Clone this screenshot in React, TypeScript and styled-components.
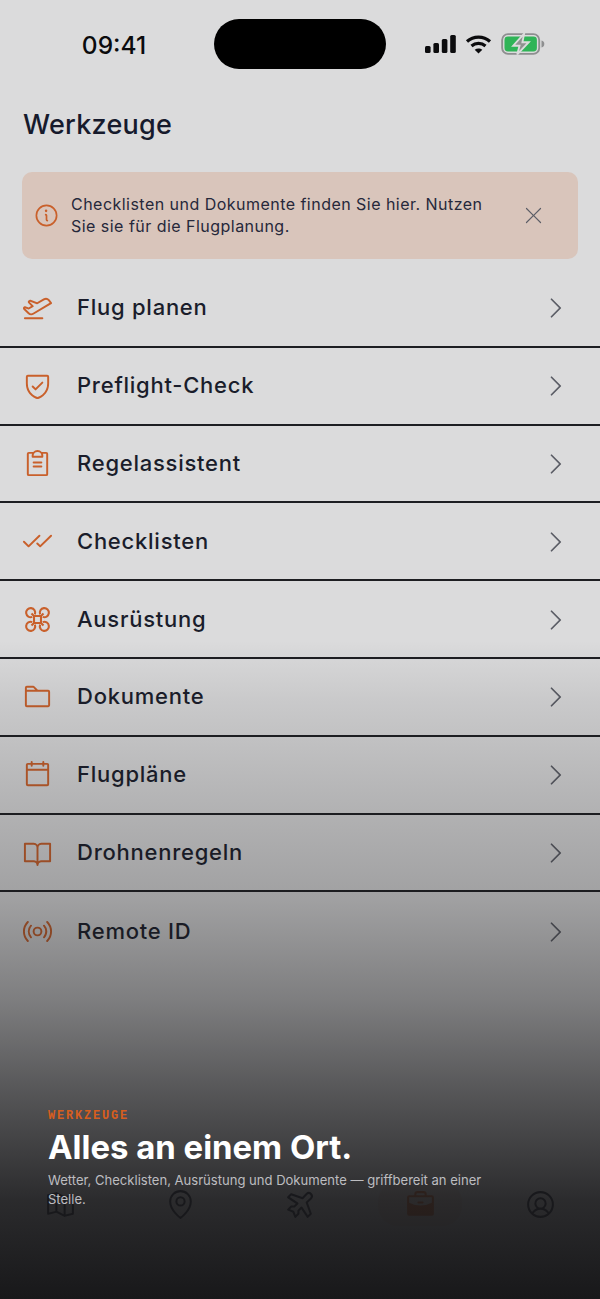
import React from 'react'
import styled, { createGlobalStyle } from 'styled-components'
import {
    PiAirplaneTakeoff,
    PiShieldCheck,
    PiClipboardText,
    PiChecks,
    PiFolder,
    PiCalendarBlank,
    PiBookOpen,
    PiBroadcast,
    PiCaretRight,
    PiXLight,
    PiInfo,
    PiMapTrifold,
    PiMapPin,
    PiAirplaneTilt,
    PiBriefcaseFill,
    PiUserCircle,
} from 'react-icons/pi'

const GlobalStyle = createGlobalStyle`
    html, body {
        margin: 0;
        padding: 0;
        background: #dbdbdc;
    }
    * {
        box-sizing: border-box;
    }
`

const Screen = styled.div`
    position: relative;
    width: 600px;
    height: 1299px;
    overflow: hidden;
    background: #dbdbdc;
    color: #161a2c;
    font-family: Inter, "Liberation Sans", sans-serif;
`

const StatusBar = styled.div`
    display: grid;
    grid-template-columns: 214px 172px 1fr;
    align-items: center;
    height: 50px;
    margin-top: 19px;
`

const Time = styled.div`
    justify-self: center;
    padding: 2px 0 0 14px;
    font-size: 24.5px;
    font-weight: 550;
    color: #0b0b0d;
`

const Island = styled.div`
    height: 50px;
    border-radius: 25px;
    background: #000;
`

const StatusIcons = styled.div`
    display: flex;
    align-items: center;
    gap: 9px;
    height: 100%;
    padding-left: 39px;
`

const Title = styled.h1`
    margin: 39px 0 0 23px;
    font-size: 27px;
    line-height: 34px;
    font-weight: 500;
    letter-spacing: 0.25px;
`

const Banner = styled.div`
    display: flex;
    align-items: center;
    height: 87px;
    margin: 30px 22px 0;
    padding: 0 32px 0 11px;
    border-radius: 10px;
    background: #d9c5bb;
`

const BannerIcon = styled.span`
    display: flex;
    font-size: 27px;
    color: #c9602b;
`

const BannerText = styled.p`
    flex: 1;
    margin: 0 28px 2px 11px;
    font-size: 16px;
    line-height: 22px;
    letter-spacing: 0.47px;
    color: #26283a;
`

const CloseIcon = styled.span`
    display: flex;
    font-size: 25px;
    color: #5b5d66;
`

const List = styled.div`
    margin-top: 11px;
`

const Row = styled.div`
    display: flex;
    align-items: center;
    height: 77.8px;
    padding: 0 31px 0 21px;
    border-bottom: 2px solid #1d1e22;

    &:last-child {
        border-bottom: none;
    }
`

const RowIcon = styled.span`
    display: flex;
    justify-content: center;
    width: 32px;
    font-size: 31px;
    color: #c9602b;
`

const RowLabel = styled.span`
    flex: 1;
    margin: 0 0 1px 24px;
    font-size: 22px;
    font-weight: 450;
    letter-spacing: 0.75px;
    color: #1a1d2b;
`

const Chevron = styled.span`
    display: flex;
    padding-top: 1px;
    font-size: 28px;
    color: #5b5d66;
`

const TabBar = styled.div`
    position: absolute;
    left: 0;
    right: 0;
    top: 1174px;
    display: grid;
    grid-template-columns: repeat(5, 120px);
    height: 60px;
`

const Tab = styled.div`
    display: flex;
    align-items: center;
    justify-content: center;
    font-size: 33px;
    color: #1a1d2b;
`

const ActiveTab = styled(Tab)`
    justify-self: center;
    align-self: center;
    width: 84px;
    height: 44px;
    border-radius: 20px;
    color: #c9602b;
    background: rgba(201, 96, 43, 0.12);
`

const Scrim = styled.div`
    position: absolute;
    inset: 0;
    background: linear-gradient(
        to bottom,
        rgba(24, 24, 26, 0) 0,
        rgba(24, 24, 26, 0) 640px,
        rgba(24, 24, 26, 0.09) 700px,
        rgba(24, 24, 26, 0.2) 800px,
        rgba(24, 24, 26, 0.3) 900px,
        rgba(24, 24, 26, 0.48) 1000px,
        rgba(24, 24, 26, 0.68) 1090px,
        rgba(24, 24, 26, 0.9) 1200px,
        rgba(24, 24, 26, 1) 1299px
    );
`

const Caption = styled.div`
    position: absolute;
    left: 48px;
    top: 1109px;
    width: 450px;
`

const Eyebrow = styled.div`
    font-family: "Liberation Mono", monospace;
    font-size: 12px;
    line-height: 15px;
    font-weight: 700;
    letter-spacing: 1.8px;
    color: #d75e1e;
`

const Headline = styled.h2`
    margin: 2px 0 0;
    font-size: 32.9px;
    line-height: 42px;
    font-weight: 700;
    color: #fff;
`

const Subline = styled.p`
    margin: 3px 0 0;
    font-size: 13.05px;
    line-height: 19px;
    color: #bdbdc0;
`

function DroneIcon() {
    return (
        <svg width="27" height="27" viewBox="0 0 31 31" fill="none" stroke="currentColor" strokeWidth="2.4" strokeLinejoin="round">
            <rect x="11.5" y="11.5" width="8" height="8" />
            <path d="M11.5 11.5L8.6 8.6M19.5 11.5L22.4 8.6M11.5 19.5L8.6 22.4M19.5 19.5L22.4 22.4" />
            <path d="M12.5 9.5A5.2 5.2 0 1 0 9.5 12.5" />
            <path d="M18.5 9.5A5.2 5.2 0 1 1 21.5 12.5" />
            <path d="M12.5 21.5A5.2 5.2 0 1 1 9.5 18.5" />
            <path d="M18.5 21.5A5.2 5.2 0 1 0 21.5 18.5" />
        </svg>
    )
}

const items = [
    { label: 'Flug planen', icon: <PiAirplaneTakeoff /> },
    { label: 'Preflight-Check', icon: <PiShieldCheck /> },
    { label: 'Regelassistent', icon: <PiClipboardText /> },
    { label: 'Checklisten', icon: <PiChecks /> },
    { label: 'Ausrüstung', icon: <DroneIcon /> },
    { label: 'Dokumente', icon: <PiFolder /> },
    { label: 'Flugpläne', icon: <PiCalendarBlank /> },
    { label: 'Drohnenregeln', icon: <PiBookOpen /> },
    { label: 'Remote ID', icon: <PiBroadcast /> },
]

function SignalIcon() {
    return (
        <svg width="31" height="18" viewBox="0 0 31 18" fill="#0b0b0d">
            <rect x="0" y="11" width="5.6" height="7" rx="1.5" />
            <rect x="8.4" y="8" width="5.6" height="10" rx="1.5" />
            <rect x="16.8" y="4" width="5.6" height="14" rx="1.5" />
            <rect x="25.2" y="0" width="5.6" height="18" rx="1.5" />
        </svg>
    )
}

function WifiIcon() {
    return (
        <svg width="27" height="19" viewBox="0 0 26 19" fill="none" stroke="#0b0b0d" strokeWidth="3.2">
            <path d="M1.5 6.5C8 0.6 18 0.6 24.5 6.5" />
            <path d="M6 11C10 7.6 16 7.6 20 11" />
            <path d="M13 18.5L9.2 14.8C11.4 13 14.6 13 16.8 14.8Z" fill="#0b0b0d" stroke="none" />
        </svg>
    )
}

function BatteryIcon() {
    return (
        <svg width="44" height="22" viewBox="0 0 38 19">
            <rect x="1" y="1" width="32" height="17" rx="5" fill="none" stroke="#8e8f90" strokeWidth="1.6" />
            <rect x="3" y="3" width="28" height="13" rx="3" fill="#2fb457" />
            <path d="M35 6.5c1.6.4 2.4 1.5 2.4 3s-.8 2.6-2.4 3z" fill="#8e8f90" />
            <path d="M20 0.5L10.5 11H16L14 18.5L24 8H18.5Z" fill="#8f9290" stroke="#dbdbdc" strokeWidth="1.6" />
        </svg>
    )
}

export default function App() {
    return (
        <Screen>
            <GlobalStyle />
            <StatusBar>
                <Time>09:41</Time>
                <Island />
                <StatusIcons>
                    <SignalIcon />
                    <WifiIcon />
                    <BatteryIcon />
                </StatusIcons>
            </StatusBar>

            <Title>Werkzeuge</Title>

            <Banner>
                <BannerIcon><PiInfo /></BannerIcon>
                <BannerText>
                    Checklisten und Dokumente finden Sie hier. Nutzen Sie sie für die Flugplanung.
                </BannerText>
                <CloseIcon><PiXLight /></CloseIcon>
            </Banner>

            <List>
                {items.map((item) => (
                    <Row key={item.label}>
                        <RowIcon>{item.icon}</RowIcon>
                        <RowLabel>{item.label}</RowLabel>
                        <Chevron><PiCaretRight /></Chevron>
                    </Row>
                ))}
            </List>

            <TabBar>
                <Tab><PiMapTrifold /></Tab>
                <Tab><PiMapPin /></Tab>
                <Tab><PiAirplaneTilt /></Tab>
                <ActiveTab><PiBriefcaseFill /></ActiveTab>
                <Tab><PiUserCircle /></Tab>
            </TabBar>

            <Scrim />

            <Caption>
                <Eyebrow>WERKZEUGE</Eyebrow>
                <Headline>Alles an einem Ort.</Headline>
                <Subline>Wetter, Checklisten, Ausrüstung und Dokumente — griffbereit an einer Stelle.</Subline>
            </Caption>
        </Screen>
    )
}
